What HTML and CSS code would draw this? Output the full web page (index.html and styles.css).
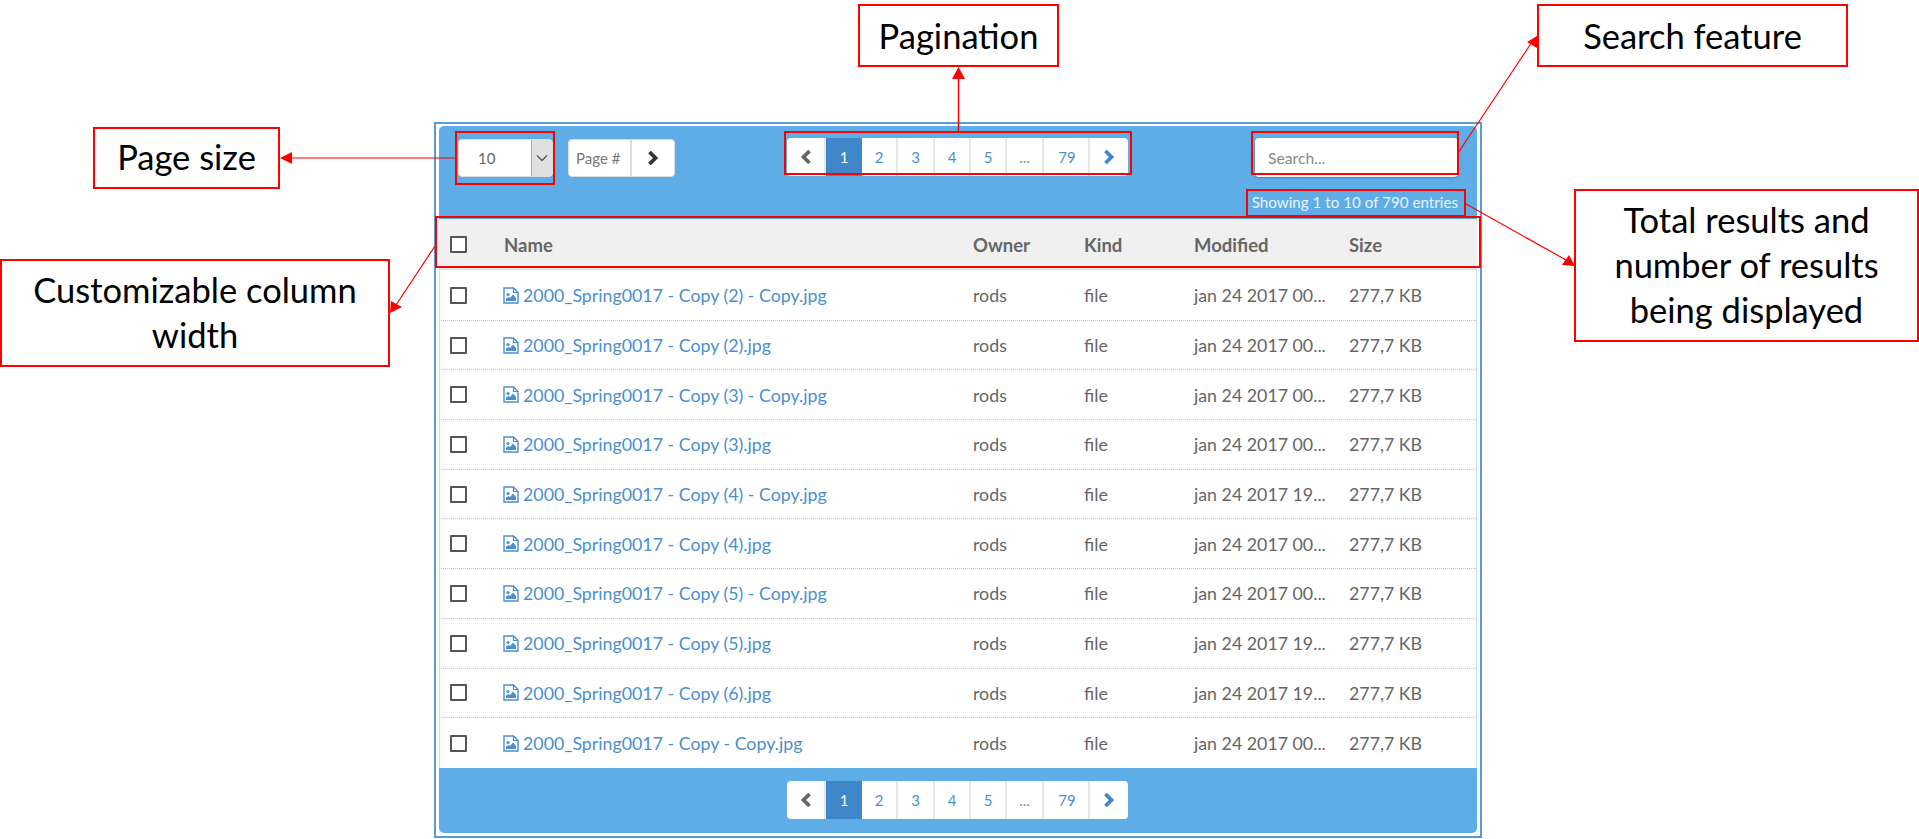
FILE: index.html
```html
<!DOCTYPE html>
<html lang="en">
<head>
<meta charset="utf-8">
<title>File browser annotated</title>
<link rel="stylesheet" href="styles.css">
</head>
<body>
<svg width="0" height="0" class="defs">
  <symbol id="file" viewBox="0 0 16 17">
    <path d="M1 1h9.5L15 5.5V16H1z" fill="none" stroke="currentColor" stroke-width="1.4"/>
    <path d="M10.5 1v4.500H15" fill="none" stroke="currentColor" stroke-width="1.2"/>
    <circle cx="5" cy="7.500" r="1.600" fill="currentColor"/>
    <path d="M3 14v-2.500l2.500-1.500 1.500 1 3-3.500 3 3.500V14z" fill="currentColor"/>
  </symbol>
  <symbol id="prev" viewBox="0 0 14 16"><path d="M10.500 2 4.500 8l6 6" fill="none" stroke="currentColor" stroke-width="3.800"/></symbol>
  <symbol id="next" viewBox="0 0 14 16"><path d="M3.500 2l6 6-6 6" fill="none" stroke="currentColor" stroke-width="3.800"/></symbol>
</svg>

<main class="frame">
  <div class="panel">
    <header class="toolbar">
      <div class="controls">
        <div class="select"><span class="select-value">10</span><span class="select-arrow"><svg width="12" height="8" viewBox="0 0 12 8"><path d="M1 1.500l5 5 5-5" fill="none" stroke="#555" stroke-width="1.300"/></svg></span></div>
        <div class="jump"><span class="jump-label">Page #</span><span class="jump-go"><svg class="chev" width="14" height="16"><use href="#next"/></svg></span></div>
        <nav class="pager pager-top">
          <a class="pg pg-prev"><svg class="chev" width="14" height="16"><use href="#prev"/></svg></a>
          <a class="pg pg-active">1</a><a class="pg">2</a><a class="pg pg-wide">3</a><a class="pg">4</a><a class="pg">5</a><a class="pg pg-wide pg-dots">...</a><a class="pg pg-last">79</a>
          <a class="pg pg-next"><svg class="chev" width="14" height="16"><use href="#next"/></svg></a>
        </nav>
        <input class="search" type="text" placeholder="Search...">
      </div>
      <p class="info">Showing 1 to 10 of 790 entries</p>
    </header>

    <div class="grid head">
      <span class="check"></span><span>Name</span><span>Owner</span><span>Kind</span><span>Modified</span><span>Size</span>
    </div>

    <div class="rows">
      <div class="grid row"><span class="check"></span><a class="name"><svg class="ficon" width="16" height="17"><use href="#file"/></svg>2000_Spring0017 - Copy (2) - Copy.jpg</a><span>rods</span><span>file</span><span>jan 24 2017 00...</span><span>277,7 KB</span></div>
      <div class="grid row"><span class="check"></span><a class="name"><svg class="ficon" width="16" height="17"><use href="#file"/></svg>2000_Spring0017 - Copy (2).jpg</a><span>rods</span><span>file</span><span>jan 24 2017 00...</span><span>277,7 KB</span></div>
      <div class="grid row"><span class="check"></span><a class="name"><svg class="ficon" width="16" height="17"><use href="#file"/></svg>2000_Spring0017 - Copy (3) - Copy.jpg</a><span>rods</span><span>file</span><span>jan 24 2017 00...</span><span>277,7 KB</span></div>
      <div class="grid row"><span class="check"></span><a class="name"><svg class="ficon" width="16" height="17"><use href="#file"/></svg>2000_Spring0017 - Copy (3).jpg</a><span>rods</span><span>file</span><span>jan 24 2017 00...</span><span>277,7 KB</span></div>
      <div class="grid row"><span class="check"></span><a class="name"><svg class="ficon" width="16" height="17"><use href="#file"/></svg>2000_Spring0017 - Copy (4) - Copy.jpg</a><span>rods</span><span>file</span><span>jan 24 2017 19...</span><span>277,7 KB</span></div>
      <div class="grid row"><span class="check"></span><a class="name"><svg class="ficon" width="16" height="17"><use href="#file"/></svg>2000_Spring0017 - Copy (4).jpg</a><span>rods</span><span>file</span><span>jan 24 2017 00...</span><span>277,7 KB</span></div>
      <div class="grid row"><span class="check"></span><a class="name"><svg class="ficon" width="16" height="17"><use href="#file"/></svg>2000_Spring0017 - Copy (5) - Copy.jpg</a><span>rods</span><span>file</span><span>jan 24 2017 00...</span><span>277,7 KB</span></div>
      <div class="grid row"><span class="check"></span><a class="name"><svg class="ficon" width="16" height="17"><use href="#file"/></svg>2000_Spring0017 - Copy (5).jpg</a><span>rods</span><span>file</span><span>jan 24 2017 19...</span><span>277,7 KB</span></div>
      <div class="grid row"><span class="check"></span><a class="name"><svg class="ficon" width="16" height="17"><use href="#file"/></svg>2000_Spring0017 - Copy (6).jpg</a><span>rods</span><span>file</span><span>jan 24 2017 19...</span><span>277,7 KB</span></div>
      <div class="grid row"><span class="check"></span><a class="name"><svg class="ficon" width="16" height="17"><use href="#file"/></svg>2000_Spring0017 - Copy - Copy.jpg</a><span>rods</span><span>file</span><span>jan 24 2017 00...</span><span>277,7 KB</span></div>
    </div>

    <footer class="footer">
      <nav class="pager">
        <a class="pg pg-prev"><svg class="chev" width="14" height="16"><use href="#prev"/></svg></a>
        <a class="pg pg-active">1</a><a class="pg">2</a><a class="pg pg-wide">3</a><a class="pg">4</a><a class="pg">5</a><a class="pg pg-wide pg-dots">...</a><a class="pg pg-last">79</a>
        <a class="pg pg-next"><svg class="chev" width="14" height="16"><use href="#next"/></svg></a>
      </nav>
    </footer>
  </div>
</main>

<div class="hl hl-size"></div>
<div class="hl hl-pager"></div>
<div class="hl hl-search"></div>
<div class="hl hl-info"></div>
<div class="hl hl-head"></div>

<svg class="arrows" width="1919" height="839" viewBox="0 0 1919 839">
  <g stroke="#f00" stroke-width="1.200" fill="none">
    <path d="M455 158H290"/>
    <path d="M435 246 396 305"/>
    <path d="M958.500 131V78" stroke-width="1.500"/>
    <path d="M1458 153 1532 42"/>
    <path d="M1466 204 1566 260"/>
  </g>
  <g fill="#f00">
    <path d="M280 158l12-6v12z"/>
    <path d="M390 313l1-12 11 6z"/>
    <path d="M958.500 67l6.500 12h-13z"/>
    <path d="M1537 36l-10 6 10 6z"/>
    <path d="M1575 266l-13-1 7-10z"/>
  </g>
</svg>

<div class="note note-size">Page size</div>
<div class="note note-col">Customizable column<br>width</div>
<div class="note note-pager">Pagination</div>
<div class="note note-search">Search feature</div>
<div class="note note-total">Total results and<br>number of results<br>being displayed</div>
</body>
</html>
```

FILE: styles.css
```css
* { box-sizing: border-box; }
html, body { margin: 0; padding: 0; }
body {
  position: relative;
  width: 1919px;
  height: 839px;
  overflow: hidden;
  background: #fff;
  font-family: Lato, "Liberation Sans", sans-serif;
  color: #666;
}
.defs { position: absolute; }

.frame {
  width: 1048px;
  height: 716px;
  margin: 122px 0 0 434px;
  padding: 2px 3px 3px;
  border: 2px solid #5b9bd5;
}
.panel {
  display: flex;
  flex-direction: column;
  height: 100%;
}

.toolbar {
  height: 93px;
  padding: 13px 19px 0;
  background: #5eade6;
  border-radius: 5px 5px 0 0;
}
.controls { display: flex; align-items: flex-start; height: 38px; }
.select {
  display: flex;
  width: 95px;
  height: 38px;
  background: #fff;
  border: 1px solid #ddd;
  border-radius: 4px;
  font-size: 15px;
  overflow: hidden;
}
.select-value { flex: 1; padding-left: 19px; line-height: 36px; }
.select-arrow {
  display: flex;
  align-items: center;
  justify-content: center;
  width: 21px;
  background: #e0e0e0;
  border-left: 1px solid #aaa;
}
.jump {
  display: flex;
  width: 107px;
  height: 38px;
  margin-left: 15px;
  background: #fff;
  border: 1px solid #ddd;
  border-radius: 4px;
}
.jump-label { width: 63px; padding-left: 7px; font-size: 15px; line-height: 36px; color: #777; border-right: 2px solid #ddd; }
.jump-go { flex: 1; display: flex; align-items: center; justify-content: center; color: #333; }

.pager {
  display: flex;
  width: 341px;
  height: 38px;
  background: #fff;
  border-radius: 4px;
  overflow: hidden;
  font-size: 15px;
  color: #4a8fd0;
}
.pager-top { margin: -1px 0 0 112px; }
.pg {
  display: flex;
  align-items: center;
  justify-content: center;
  width: 36px;
  border-right: 2px solid #e6e6e6;
}
.pg-wide { width: 37px; }
.pg-last { width: 46px; padding-left: 2px; }
.pg-prev { width: 39px; color: #666; }
.pg-next { flex: 1; border-right: 0; color: #3f87c8; }
.pg-active { background: #3f87c8; color: #fff; border-right: 0; }
.pg-dots { color: #888; }

.search {
  width: 203px;
  height: 39px;
  margin: -1px 0 0 auto;
  padding: 0 13px;
  border: 0;
  border-radius: 4px;
  box-shadow: 0 1px 2px rgba(0, 0, 0, .25);
  font: 15.700px Lato, sans-serif;
  color: #666;
  background: #fff;
}
.search::placeholder { color: #888; opacity: 1; }

.info {
  margin: 15px 0 0;
  font-size: 15.200px;
  line-height: 20px;
  text-align: right;
  color: #e8f3fc;
}

.grid {
  display: grid;
  grid-template-columns: 65px 469px 111px 110px 155px 1fr;
  align-items: center;
  font-size: 17.800px;
}
.grid > .check { margin-left: 11px; }
.check {
  display: block;
  width: 17px;
  height: 17px;
  background: #fff;
  border: 2px solid #555;
  border-radius: 1px;
}
.head {
  height: 51px;
  padding-top: 2px;
  background: #f0f0f0;
  border-bottom: 1px solid #ddd;
  font-weight: 700;
  color: #666;
  font-size: 18.500px;
}
.head .check { margin-top: -2px; }
.rows {
  display: grid;
  grid-auto-rows: 49.700px;
  height: 498px;
  padding-top: 1px;
  border-left: 1px solid #cfe0f3;
  border-right: 1px solid #cfe0f3;
}
.row {
  margin-left: -1px;
  border-bottom: 1px dotted #a9cdf0;
}
.row:last-child { border-bottom: 0; }
.name {
  display: flex;
  align-items: center;
  color: #4a8fd0;
}
.ficon { flex: none; margin: 0 4px 0 -1px; color: #4a8fd0; }
.chev { display: block; }

.footer {
  flex: 1;
  padding: 13px 0 0 348px;
  background: #5eade6;
  border-radius: 0 0 5px 5px;
}

/* Annotations drawn over the screenshot */
.hl { position: absolute; border: 2px solid #f00; }
.hl-size { left: 455px; top: 131px; width: 100px; height: 54px; }
.hl-pager { left: 784px; top: 131px; width: 348px; height: 44px; }
.hl-search { left: 1251px; top: 131px; width: 208px; height: 44px; }
.hl-info { left: 1246px; top: 189px; width: 220px; height: 28px; }
.hl-head { left: 435px; top: 216px; width: 1046px; height: 52px; }

.arrows { position: absolute; left: 0; top: 0; }

.note {
  position: absolute;
  display: flex;
  align-items: center;
  justify-content: center;
  background: #fff;
  border: 2px solid #f00;
  font-size: 34.500px;
  line-height: 45px;
  text-align: center;
  color: #000;
}
.note-size { left: 93px; top: 127px; width: 187px; height: 62px; padding-bottom: 3px; }
.note-col { left: 0; top: 259px; width: 390px; height: 108px; padding-bottom: 3px; }
.note-pager { left: 858px; top: 4px; width: 201px; height: 63px; }
.note-search { left: 1537px; top: 4px; width: 311px; height: 63px; }
.note-total { left: 1574px; top: 189px; width: 345px; height: 153px; padding-bottom: 3px; }
```
